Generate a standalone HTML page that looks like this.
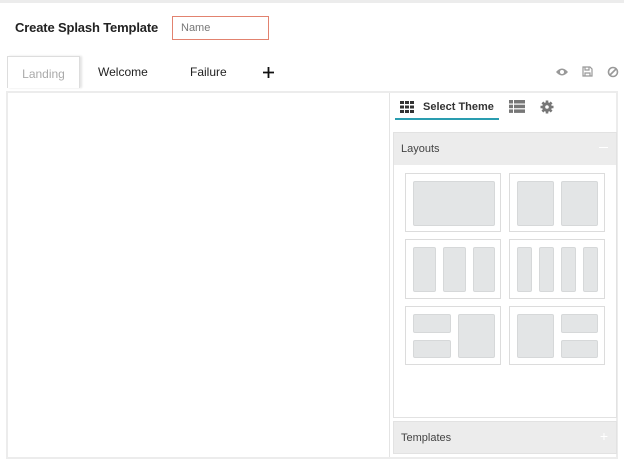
<!DOCTYPE html>
<html><head><meta charset="utf-8"><style>
*{margin:0;padding:0;box-sizing:border-box}
body{width:624px;height:462px;background:#fff;font-family:"Liberation Sans",sans-serif;position:relative;overflow:hidden}
.a{position:absolute}
.lb{position:absolute;border:1px solid #dcdcdc;background:#fff}
.in{position:absolute;background:#e3e5e6;border:1px solid #d6d8d9;border-radius:2px}
</style></head><body>
<div class="a" style="left:0;top:0;width:624px;height:3px;background:#ececec"></div>
<div class="a" style="left:15px;top:20px;font-size:13px;font-weight:bold;color:#222;letter-spacing:-0.15px">Create Splash Template</div>
<div class="a" style="left:172px;top:16px;width:97px;height:24px;border:1px solid #e2826f;font-size:11px;color:#777;padding:5px 0 0 8px">Name</div>
<div class="a" style="left:7px;top:56px;width:73px;height:32px;border:1px solid #ddd;border-bottom:none;box-shadow:2px 0 2px #e4e4e4;font-size:12px;color:#aaa;text-align:center;padding-top:10px">Landing</div>
<div class="a" style="left:98px;top:65px;font-size:12px;color:#222">Welcome</div>
<div class="a" style="left:190px;top:65px;font-size:12px;color:#222">Failure</div>
<svg class="a" style="left:263px;top:67px" width="11" height="11" viewBox="0 0 11 11"><path d="M5.5 0V11M0 5.5H11" stroke="#111" stroke-width="1.8"/></svg>
<svg class="a" style="left:555px;top:67px" width="14" height="10" viewBox="0 0 14 10"><path d="M1 5Q7-2 13 5Q7 12 1 5Z" fill="#999"/><circle cx="7" cy="5" r="2" fill="#fff"/></svg>
<svg class="a" style="left:582px;top:66px" width="11" height="11" viewBox="0 0 11 11"><path d="M1 1H8L10 3V10H1Z M3 1V4H7V1 M3 10V7H8V10" fill="none" stroke="#999" stroke-width="1.2"/></svg>
<svg class="a" style="left:607px;top:66px" width="12" height="12" viewBox="0 0 12 12"><circle cx="6" cy="6" r="4.5" fill="none" stroke="#999" stroke-width="1.6"/><path d="M3 9L9 3" stroke="#999" stroke-width="1.6"/></svg>
<div class="a" style="left:6px;top:91px;width:612px;height:368px;border:2px solid #ececec"></div>
<div class="a" style="left:389px;top:93px;width:1px;height:364px;background:#e4e4e4"></div>
<svg class="a" style="left:400px;top:101px" width="15" height="12" viewBox="0 0 15 12"><g fill="#333"><rect x="0" y="0" width="4" height="3"/><rect x="5" y="0" width="4" height="3"/><rect x="10" y="0" width="4" height="3"/><rect x="0" y="4.5" width="4" height="3"/><rect x="5" y="4.5" width="4" height="3"/><rect x="10" y="4.5" width="4" height="3"/><rect x="0" y="9" width="4" height="3"/><rect x="5" y="9" width="4" height="3"/><rect x="10" y="9" width="4" height="3"/></g></svg>
<div class="a" style="left:423px;top:101px;font-size:11px;font-weight:bold;color:#333">Select Theme</div>
<div class="a" style="left:395px;top:118px;width:104px;height:2px;background:#2a9db0"></div>
<svg class="a" style="left:509px;top:100px" width="16" height="13" viewBox="0 0 16 13"><g fill="#777"><rect x="0" y="0" width="4" height="3.5"/><rect x="5" y="0" width="11" height="3.5"/><rect x="0" y="4.7" width="4" height="3.5"/><rect x="5" y="4.7" width="11" height="3.5"/><rect x="0" y="9.4" width="4" height="3.5"/><rect x="5" y="9.4" width="11" height="3.5"/></g></svg>
<svg class="a" style="left:540px;top:100px" width="14" height="14" viewBox="0 0 14 14"><g fill="#777"><circle cx="7" cy="7" r="4.8"/><g stroke="#777" stroke-width="2.6"><path d="M7 0.5V13.5M0.5 7H13.5M2.4 2.4L11.6 11.6M11.6 2.4L2.4 11.6"/></g></g><circle cx="7" cy="7" r="1.8" fill="#fff"/></svg>
<div class="a" style="left:393px;top:132px;width:224px;height:286px;border:1px solid #e2e2e2"></div>
<div class="a" style="left:394px;top:133px;width:222px;height:32px;background:#ececec;font-size:11px;color:#444;padding:10px 0 0 7px">Layouts<span style="position:absolute;right:8px;top:14px;width:9px;height:1px;background:#fff"></span></div>
<div class="lb" style="left:405px;top:173px;width:96px;height:59px"></div>
<div class="in" style="left:413px;top:181px;width:82px;height:45px"></div>
<div class="lb" style="left:509px;top:173px;width:96px;height:59px"></div>
<div class="in" style="left:517px;top:181px;width:37px;height:45px"></div>
<div class="in" style="left:561px;top:181px;width:37px;height:45px"></div>
<div class="lb" style="left:405px;top:239px;width:96px;height:60px"></div>
<div class="in" style="left:413px;top:247px;width:23px;height:45px"></div>
<div class="in" style="left:443px;top:247px;width:23px;height:45px"></div>
<div class="in" style="left:473px;top:247px;width:22px;height:45px"></div>
<div class="lb" style="left:509px;top:239px;width:96px;height:60px"></div>
<div class="in" style="left:517px;top:247px;width:15px;height:45px"></div>
<div class="in" style="left:539px;top:247px;width:15px;height:45px"></div>
<div class="in" style="left:561px;top:247px;width:15px;height:45px"></div>
<div class="in" style="left:583px;top:247px;width:15px;height:45px"></div>
<div class="lb" style="left:405px;top:306px;width:96px;height:59px"></div>
<div class="in" style="left:413px;top:314px;width:38px;height:19px"></div>
<div class="in" style="left:413px;top:340px;width:38px;height:18px"></div>
<div class="in" style="left:458px;top:314px;width:37px;height:44px"></div>
<div class="lb" style="left:509px;top:306px;width:96px;height:59px"></div>
<div class="in" style="left:517px;top:314px;width:37px;height:44px"></div>
<div class="in" style="left:561px;top:314px;width:37px;height:19px"></div>
<div class="in" style="left:561px;top:340px;width:37px;height:18px"></div>
<div class="a" style="left:393px;top:421px;width:224px;height:33px;background:#ececec;border:1px solid #e2e2e2;font-size:11px;color:#444;padding:10px 0 0 7px">Templates<span style="position:absolute;right:8px;top:6px;color:#fff;font-size:14px">+</span></div>
</body></html>
